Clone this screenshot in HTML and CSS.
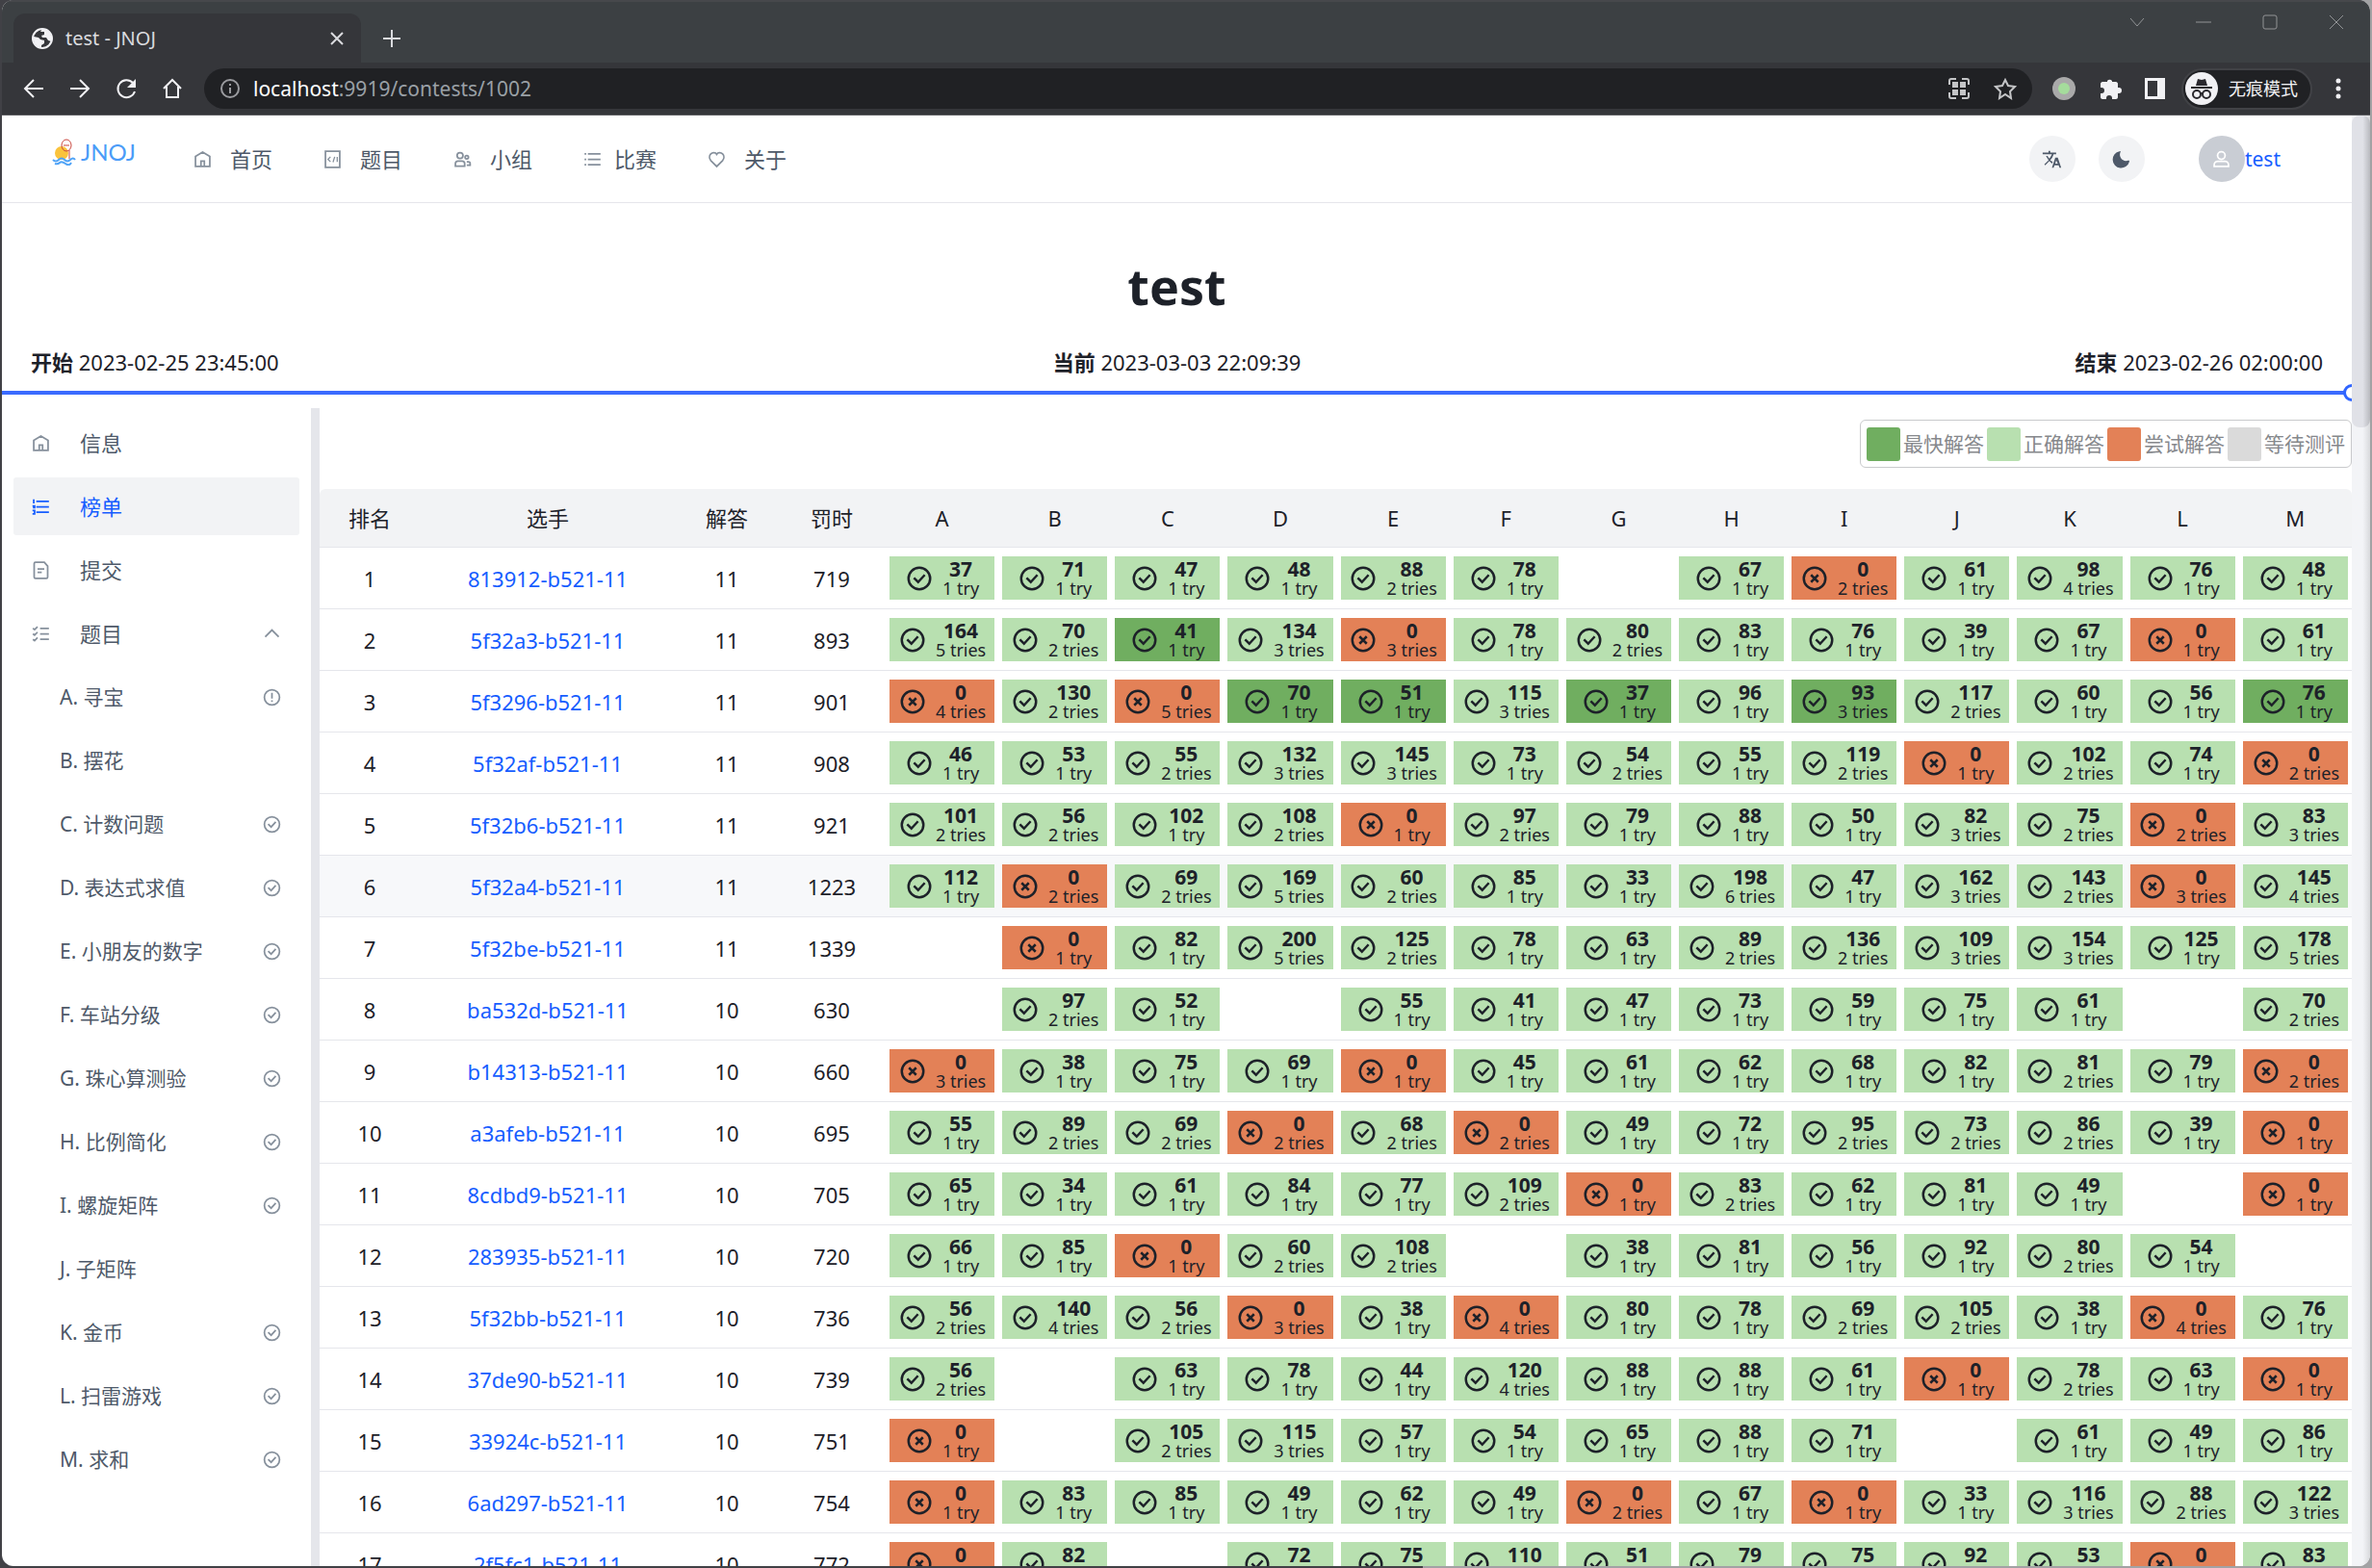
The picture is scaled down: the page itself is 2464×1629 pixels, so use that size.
FILE: index.html
```html
<!DOCTYPE html>
<html lang="zh-CN">
<head>
<meta charset="utf-8">
<title>test - JNOJ</title>
<link rel="stylesheet" href="styles.css">
</head>
<body>
<svg class="sprite" aria-hidden="true">
  <symbol id="i-home" viewBox="0 0 48 48"><path d="M7 17 24 7l17 10v24H7V17Z M20 41V28h8v13"/></symbol>
  <symbol id="i-code" viewBox="0 0 48 48"><path d="M7 5h34v38H7V5Z"/><path d="m19 18-6 6 6 6M29 18l-4 13M35 18v12" stroke-width="3"/></symbol>
  <symbol id="i-group" viewBox="0 0 48 48"><circle cx="18" cy="15" r="7"/><circle cx="34" cy="19" r="4"/><path d="M7 34a6 6 0 0 1 6-6h10a6 6 0 0 1 6 6v6H7v-6Z M34 30h4a4 4 0 0 1 4 4v4h-8"/></symbol>
  <symbol id="i-list" viewBox="0 0 48 48"><path d="M13 24h30M5 11h4M13 11h30M5 37h4M13 37h30M5 24h4"/></symbol>
  <symbol id="i-heart" viewBox="0 0 48 48"><path d="M38 11c-4-4-11-4-14 1-3-5-10-5-14-1-4 4-4 11 0 16l14 14 14-14c4-5 4-12 0-16Z"/></symbol>
  <symbol id="i-ordered" viewBox="0 0 48 48"><path d="M13 24h30M13 11h30M13 37h30M7 6v10M4 22h5v4H5M4 33h5v8H4"/></symbol>
  <symbol id="i-file" viewBox="0 0 48 48"><path d="M16 21h16M16 29h10M11 43h26a3 3 0 0 0 3-3V14l-8-9H11a3 3 0 0 0-3 3v32a3 3 0 0 0 3 3Z"/></symbol>
  <symbol id="i-checks" viewBox="0 0 48 48"><path d="M22 11h21M22 24h21M22 37h21M5 11l4 3 7-7M5 24l4 3 7-7M5 37l4 3 7-7"/></symbol>
  <symbol id="i-up" viewBox="0 0 48 48"><path d="M8 31 24 15l16 16"/></symbol>
  <symbol id="i-ok" viewBox="0 0 48 48"><circle cx="24" cy="24" r="18"/><path d="m15 23 7 7 11-12"/></symbol>
  <symbol id="i-bad" viewBox="0 0 48 48"><circle cx="24" cy="24" r="18"/><path d="m18 18 12 12M30 18 18 30"/></symbol>
  <symbol id="i-warn" viewBox="0 0 48 48"><circle cx="24" cy="24" r="18"/><path d="M24 13v14M24 31v4"/></symbol>
  <symbol id="i-user" viewBox="0 0 48 48"><circle cx="24" cy="15" r="9"/><path d="M7 37c0-5 4-8 8-8h18c4 0 8 3 8 8v4H7v-4Z"/></symbol>
</svg>

<div class="window">
  <header class="chrome">
    <div class="tabstrip">
      <div class="tab">
        <svg class="tab-globe" viewBox="0 0 22 22"><circle cx="11" cy="11" r="10" fill="#35363a" stroke="#f1f1f4" stroke-width="2"/><path d="M11 1a10 10 0 0 1 9 13l-3-1-2-3-4 0-1-2 3-1 0-3-4 0Z" fill="#f1f1f4"/><path d="M2 9l5 1 2 2 4 1 0 3-3 2 0 3A10 10 0 0 1 2 9Z" fill="#f1f1f4"/></svg>
        <span class="tab-title">test - JNOJ</span>
        <button class="bare" aria-label="关闭标签页"><svg width="14" height="14" viewBox="0 0 14 14" class="ln"><path d="m1 1 12 12M13 1 1 13"/></svg></button>
      </div>
      <button class="bare newtab" aria-label="新标签页"><svg width="20" height="20" viewBox="0 0 20 20" class="ln"><path d="M10 1v18M1 10h18"/></svg></button>
      <div class="winctl">
        <button class="bare" aria-label="搜索标签页"><svg width="16" height="16" viewBox="0 0 16 16"><path d="m1 4 7 8 7-8"/></svg></button>
        <button class="bare" aria-label="最小化"><svg width="16" height="16" viewBox="0 0 16 16"><path d="M0 8h16"/></svg></button>
        <button class="bare" aria-label="最大化"><svg width="16" height="16" viewBox="0 0 16 16"><rect x="1" y="1" width="14" height="14" rx="2"/></svg></button>
        <button class="bare" aria-label="关闭"><svg width="16" height="16" viewBox="0 0 16 16"><path d="m1 1 14 14M15 1 1 15"/></svg></button>
      </div>
    </div>
    <div class="toolbar">
      <div class="toolnav">
        <button class="bare" aria-label="后退"><svg width="24" height="24" viewBox="0 0 24 24"><path d="M22 12H4M12 3l-9 9 9 9"/></svg></button>
        <button class="bare" aria-label="前进"><svg width="24" height="24" viewBox="0 0 24 24"><path d="M2 12h18M12 3l9 9-9 9"/></svg></button>
        <button class="bare" aria-label="刷新"><svg width="24" height="24" viewBox="0 0 24 24"><path d="M19 6a9 9 0 1 0 2 9"/><path d="M22 2v9h-9Z" fill="#f1f1f4" stroke="none"/></svg></button>
        <button class="bare" aria-label="主页"><svg width="24" height="24" viewBox="0 0 24 24"><path d="M3 12l9-9 9 9M6 10v11h12V10"/></svg></button>
      </div>
      <div class="omnibox">
        <svg width="22" height="22" viewBox="0 0 22 22" class="info"><circle cx="11" cy="11" r="9"/><path d="M11 10v6M11 6v2"/></svg>
        <span class="url"><b>localhost</b>:9919/contests/1002</span>
        <svg width="24" height="24" viewBox="0 0 24 24"><path d="M2 8V4q0-2 2-2h5M15 2h5q2 0 2 2v4M22 16v4q0 2-2 2h-5M9 22H4q-2 0-2-2v-4" fill="none" stroke="#c4c5c7" stroke-width="2"/><path d="M5 5h6v6H5zM13 5h6v6h-6zM5 13h6v6H5zM13 13h6v6h-6z" fill="#c4c5c7"/></svg>
        <svg width="24" height="24" viewBox="0 0 24 24" class="star"><path d="m12 3 3 6 7 1-5 5 1 7-6-4-6 4 1-7-5-5 7-1Z" fill="none" stroke="#c4c5c7" stroke-width="2"/></svg>
      </div>
      <div class="exts">
        <svg width="24" height="24" viewBox="0 0 24 24"><circle cx="12" cy="12" r="12" fill="#a9a9a9"/><circle cx="12" cy="12" r="6" fill="#a5dc9c"/></svg>
        <svg width="24" height="24" viewBox="0 0 24 24"><path d="M21 11h-1V7c0-1-1-2-2-2h-4V4a3 3 0 0 0-5 0v1H4C3 5 2 6 2 7v4h1a3 3 0 0 1 0 6H2v4c0 1 1 2 2 2h4v-1a3 3 0 0 1 6 0v1h4c1 0 2-1 2-2v-4h1a3 3 0 0 0 0-6Z" fill="#f1f1f4"/></svg>
        <svg width="22" height="24" viewBox="0 0 22 24"><path d="M0 1h21v22H0zM3 4v16h10V4z" fill="#f1f1f4" fill-rule="evenodd"/></svg>
      </div>
      <button class="incognito">
        <svg width="34" height="34" viewBox="0 0 34 34"><circle cx="17" cy="17" r="17" fill="#f1f1f4"/><path d="M6 15h22v2H6zM11 14l2-7 4 1 4-1 2 7z" fill="#29282d"/><g fill="none" stroke="#29282d" stroke-width="2"><circle cx="12" cy="23" r="4"/><circle cx="22" cy="23" r="4"/><path d="M15 22h4"/></g></svg>
        无痕模式
      </button>
      <button class="bare menu" aria-label="菜单"><svg width="6" height="22" viewBox="0 0 6 22" fill="#f1f1f4"><circle cx="3" cy="3" r="2.500"/><circle cx="3" cy="11" r="2.500"/><circle cx="3" cy="19" r="2.500"/></svg></button>
    </div>
  </header>

  <div class="viewport">
    <div class="page">
      <header class="topbar">
        <a class="logo" href="#"><svg width="25" height="28" viewBox="0 0 25 28"><circle cx="10" cy="15" r="7" fill="#fac33c"/><g fill="none" stroke="#c9453c"><ellipse cx="15" cy="7" rx="5" ry="6"/><path d="M12 7h6M18 12v9"/></g><path d="M1 22q3 3 6 0t6 0 6 0 5 0M3 26q3 1 5-1t6 1 6-1" fill="none" stroke="#4fa3f7" stroke-width="2"/></svg><span>JNOJ</span></a>
        <nav class="mainnav">
          <a href="#"><svg class="ic"><use href="#i-home"/></svg>首页</a>
          <a href="#"><svg class="ic"><use href="#i-code"/></svg>题目</a>
          <a href="#"><svg class="ic"><use href="#i-group"/></svg>小组</a>
          <a href="#" class="tight"><svg class="ic"><use href="#i-list"/></svg>比赛</a>
          <a href="#"><svg class="ic"><use href="#i-heart"/></svg>关于</a>
        </nav>
        <div class="tools">
          <button class="round" aria-label="语言"><svg width="21" height="21" viewBox="0 0 24 24" fill="#4e5969"><path d="m13 15-3-2c2-2 3-4 4-7h3V4h-7V2H8v2H1v2h11c-1 2-2 4-3 5-1-1-2-2-2-3H5c1 2 2 3 3 5l-5 5 1 1 5-5 3 3 1-2Zm5-5h-2l-4 12h2l1-3h5l1 3h2l-4-12Zm-2 7 1-4 2 4h-3Z"/></svg></button>
          <button class="round" aria-label="深色模式"><svg width="21" height="21" viewBox="0 0 48 48" fill="#4e5969"><path d="M43 30A20 20 0 1 1 20 5c2-1 3 0 2 2-5 12 6 24 18 20 3-1 4 0 3 3Z"/></svg></button>
          <a class="user" href="#"><span class="avatar"><svg class="ic"><use href="#i-user"/></svg></span>test</a>
        </div>
      </header>

      <section class="contest">
        <h1>test</h1>
        <div class="times">
          <div><b>开始</b> 2023-02-25 23:45:00</div>
          <div><b>当前</b> 2023-03-03 22:09:39</div>
          <div><b>结束</b> 2023-02-26 02:00:00</div>
        </div>
        <div class="progress"><i class="knob"></i></div>
      </section>

      <div class="body">
        <nav class="side">
          <a href="#"><svg class="ic"><use href="#i-home"/></svg>信息</a>
          <a href="#" class="active"><svg class="ic"><use href="#i-ordered"/></svg>榜单</a>
          <a href="#"><svg class="ic"><use href="#i-file"/></svg>提交</a>
          <a href="#"><svg class="ic"><use href="#i-checks"/></svg>题目<svg class="ic end"><use href="#i-up"/></svg></a>
          <a href="#" class="sub">A. 寻宝<svg class="ic end"><use href="#i-warn"/></svg></a>
          <a href="#" class="sub">B. 摆花</a>
          <a href="#" class="sub">C. 计数问题<svg class="ic end"><use href="#i-ok"/></svg></a>
          <a href="#" class="sub">D. 表达式求值<svg class="ic end"><use href="#i-ok"/></svg></a>
          <a href="#" class="sub">E. 小朋友的数字<svg class="ic end"><use href="#i-ok"/></svg></a>
          <a href="#" class="sub">F. 车站分级<svg class="ic end"><use href="#i-ok"/></svg></a>
          <a href="#" class="sub">G. 珠心算测验<svg class="ic end"><use href="#i-ok"/></svg></a>
          <a href="#" class="sub">H. 比例简化<svg class="ic end"><use href="#i-ok"/></svg></a>
          <a href="#" class="sub">I. 螺旋矩阵<svg class="ic end"><use href="#i-ok"/></svg></a>
          <a href="#" class="sub">J. 子矩阵</a>
          <a href="#" class="sub">K. 金币<svg class="ic end"><use href="#i-ok"/></svg></a>
          <a href="#" class="sub">L. 扫雷游戏<svg class="ic end"><use href="#i-ok"/></svg></a>
          <a href="#" class="sub">M. 求和<svg class="ic end"><use href="#i-ok"/></svg></a>
        </nav>
        <main class="board">
          <ul class="legend">
            <li><i class="first"></i>最快解答</li>
            <li><i class="ok"></i>正确解答</li>
            <li><i class="bad"></i>尝试解答</li>
            <li><i class="wait"></i>等待测评</li>
          </ul>
          <table>
            <thead><tr><th class="c-rank">排名</th><th class="c-who">选手</th><th class="c-solved">解答</th><th class="c-time">罚时</th><th>A</th><th>B</th><th>C</th><th>D</th><th>E</th><th>F</th><th>G</th><th>H</th><th>I</th><th>J</th><th>K</th><th>L</th><th>M</th></tr></thead>
            <tbody id="standings"></tbody>
          </table>
        </main>
      </div>
    </div>
    <div class="scrollbar"><i></i></div>
  </div>
</div>
<script src="board.js"></script>
</body>
</html>
```
FILE: styles.css
```css
* { box-sizing: border-box; }
body {
  margin: 0;
  height: 100vh;
  overflow: hidden;
  padding: 0 2px 2px;
  background: linear-gradient(90deg, #414146 60%, #a2a2a4 60%);
  color: #1d2129;
  font: 22px/32px "Noto Sans", "Noto Sans CJK SC", sans-serif;
}
a { color: inherit; text-decoration: none; }
button { font: inherit; }
.sprite { display: none; }
.ic {
  width: 21px;
  height: 21px;
  flex: none;
  fill: none;
  stroke: currentColor;
  stroke-width: 4;
}
.bare {
  display: flex;
  padding: 0;
  border: 0;
  background: none;
}

.window {
  display: flex;
  flex-direction: column;
  height: 100%;
  overflow: hidden;
  border-radius: 12px;
  background: #fff;
}

/* browser frame */
.chrome { background: #3c4043; color: #dadbdf; }
.tabstrip {
  display: flex;
  height: 65px;
  padding: 12px 27px 0 12px;
  border-top: 2px solid #47484c;
}
.tab {
  display: flex;
  align-items: center;
  gap: 13px;
  width: 361px;
  padding: 0 18px 0 19px;
  border-radius: 12px 12px 0 0;
  background: #35363a;
  font-size: 20px;
}
.tab-globe { width: 22px; height: 22px; }
.tab-title { flex: 1; }
.ln { fill: none; stroke: #dadbdf; stroke-width: 2; }
.newtab { align-items: center; margin-left: 22px; }
.winctl {
  display: flex;
  gap: 53px;
  margin-left: auto;
}
.winctl svg { fill: none; stroke: #929496; }
.winctl .bare { height: 16px; margin-top: 1px; }
.toolbar {
  display: flex;
  align-items: center;
  height: 55px;
  padding: 0 30px 0 21px;
  border-bottom: 1px solid #5b5c60;
  background: #35363a;
}
.toolnav { display: flex; gap: 24px; }
.toolnav svg { fill: none; stroke: #f1f1f4; stroke-width: 2; }
.omnibox {
  display: flex;
  flex: 1;
  align-items: center;
  height: 42px;
  margin-left: 21px;
  padding: 0 16px;
  border-radius: 21px;
  background: #202124;
  color: #9aa0a6;
  font-size: 21px;
}
.info { fill: none; stroke: #9a9b9f; stroke-width: 2; }
.url { flex: 1; margin-left: 13px; }
.url b { color: #fff; font-weight: 400; }
.star { margin-left: 24px; }
.exts { display: flex; gap: 24px; margin: 0 16px 0 21px; }
.incognito {
  display: flex;
  align-items: center;
  gap: 11px;
  height: 43px;
  padding: 0 13px 0 2px;
  border: 2px solid #414246;
  border-radius: 22px;
  background: #202124;
  color: #f1f1f4;
  font-size: 18px;
}
.menu { margin-left: 24px; }

.viewport { display: flex; flex: 1; min-height: 0; }
.page { flex: 1; min-width: 0; overflow: hidden; }
.scrollbar { width: 19px; background: linear-gradient(90deg, #f3f4f7 60%, #d8d9dc); }
.scrollbar i {
  display: block;
  height: 22%;
  max-height: 324px;
  border-radius: 8px;
  background: linear-gradient(90deg, #e0e1e7 60%, #b9babf);
}

/* site header */
.topbar {
  display: flex;
  height: 91px;
  padding: 0 74px 0 52px;
  border-bottom: 1px solid #e5e6eb;
}
.logo {
  display: flex;
  align-items: center;
  gap: 5px;
  width: 146px;
  height: 76px;
  color: #4a9cf8;
  font: 24px/32px "Lato", sans-serif;
}
.mainnav { display: flex; gap: 52px; align-items: center; color: #4e5969; }
.mainnav a { display: flex; align-items: center; gap: 18px; }
.mainnav .tight { gap: 12px; }
.mainnav .ic, .side .ic { color: #86909c; }
.tools { display: flex; align-items: center; margin-left: auto; }
.round {
  display: flex;
  align-items: center;
  justify-content: center;
  width: 48px;
  height: 48px;
  margin-right: 24px;
  padding: 0;
  border: 0;
  border-radius: 50%;
  background: #f2f3f5;
}
.user { display: flex; align-items: center; margin-left: 32px; color: #165dff; font-size: 21px; }
.avatar {
  display: flex;
  align-items: center;
  justify-content: center;
  width: 48px;
  height: 48px;
  border-radius: 50%;
  background: #c9cdd4;
  color: #fff;
}

/* contest heading */
.contest h1 {
  margin: 0;
  padding-top: 46px;
  font-size: 52px;
  line-height: 80px;
  text-align: center;
}
.times {
  display: flex;
  justify-content: space-between;
  padding: 23px 30px 14px;
}
.progress { position: relative; height: 4px; background: #3a6bff; }
.knob {
  position: absolute;
  right: -9px;
  top: -7px;
  width: 18px;
  height: 18px;
  border: 3px solid #3065ff;
  border-radius: 50%;
  background: #fff;
}

.body { display: flex; padding-top: 14px; }
.side {
  width: 330px;
  height: 1300px;
  flex: none;
  padding: 6px 12px;
  border-right: 9px solid #e5e6eb;
  color: #4e5969;
}
.side a {
  display: flex;
  align-items: center;
  height: 60px;
  margin-bottom: 6px;
  padding: 0 18px;
  gap: 30px;
  border-radius: 3px;
}
.side .sub { padding-left: 48px; font-size: 21px; }
.side .active { background: #f2f3f5; }
.side .active, .side .active .ic { color: #165dff; }
.side .end { margin-left: auto; }

.board { flex: 1; min-width: 0; }
.legend {
  display: flex;
  gap: 3px;
  align-items: center;
  width: fit-content;
  height: 50px;
  margin: 12px 0 22px auto;
  padding: 0 6px;
  border: 1px solid #c9cacc;
  border-radius: 6px;
  list-style: none;
  color: #86888c;
  font-size: 21px;
}
.legend li { display: flex; align-items: center; gap: 3px; }
.legend i { width: 35px; height: 35px; border-radius: 3px; }
.first { background: #70ae60; }
.ok { background: #b8e0b0; }
.bad { background: #e38157; }
.wait { background: #dadada; }

table { width: 100%; table-layout: fixed; border-collapse: separate; border-spacing: 0; }
th { height: 61px; padding: 0; background: #f2f3f5; border-bottom: 1px solid #e5e6eb; font-weight: 400; }
th:first-child { border-radius: 6px 0 0; }
th:last-child { border-radius: 0 6px 0 0; }
td { height: 64px; padding: 0 4px; border-bottom: 1px solid #e5e6eb; text-align: center; }
.c-rank { width: 104px; }
.c-who { width: 266px; }
.c-solved { width: 106px; }
.c-time { width: 112px; }
td a { color: #165dff; }
.hover td { background: #f7f8fa; }
.cell {
  display: flex;
  align-items: center;
  justify-content: center;
  gap: 9px;
  height: 45px;
}
.cell .ic { width: 30px; height: 30px; }
.cell span { font-size: 18px; line-height: 20px; }
.cell b { display: block; font-size: 21px; line-height: 20px; }
```
FILE: board.js
```js
// Each problem cell: minutes/attempts, "*" = fastest solve, "x" = failed, "-" = no attempt.
const teams = `
813912 11 719 37/1 71/1 47/1 48/1 88/2 78/1 - 67/1 x0/2 61/1 98/4 76/1 48/1
5f32a3 11 893 164/5 70/2 *41/1 134/3 x0/3 78/1 80/2 83/1 76/1 39/1 67/1 x0/1 61/1
5f3296 11 901 x0/4 130/2 x0/5 *70/1 *51/1 115/3 *37/1 96/1 *93/3 117/2 60/1 56/1 *76/1
5f32af 11 908 46/1 53/1 55/2 132/3 145/3 73/1 54/2 55/1 119/2 x0/1 102/2 74/1 x0/2
5f32b6 11 921 101/2 56/2 102/1 108/2 x0/1 97/2 79/1 88/1 50/1 82/3 75/2 x0/2 83/3
5f32a4 11 1223 112/1 x0/2 69/2 169/5 60/2 85/1 33/1 198/6 47/1 162/3 143/2 x0/3 145/4
5f32be 11 1339 - x0/1 82/1 200/5 125/2 78/1 63/1 89/2 136/2 109/3 154/3 125/1 178/5
ba532d 10 630 - 97/2 52/1 - 55/1 41/1 47/1 73/1 59/1 75/1 61/1 - 70/2
b14313 10 660 x0/3 38/1 75/1 69/1 x0/1 45/1 61/1 62/1 68/1 82/1 81/2 79/1 x0/2
a3afeb 10 695 55/1 89/2 69/2 x0/2 68/2 x0/2 49/1 72/1 95/2 73/2 86/2 39/1 x0/1
8cdbd9 10 705 65/1 34/1 61/1 84/1 77/1 109/2 x0/1 83/2 62/1 81/1 49/1 - x0/1
283935 10 720 66/1 85/1 x0/1 60/2 108/2 - 38/1 81/1 56/1 92/1 80/2 54/1 -
5f32bb 10 736 56/2 140/4 56/2 x0/3 38/1 x0/4 80/1 78/1 69/2 105/2 38/1 x0/4 76/1
37de90 10 739 56/2 - 63/1 78/1 44/1 120/4 88/1 88/1 61/1 x0/1 78/2 63/1 x0/1
33924c 10 751 x0/1 - 105/2 115/3 57/1 54/1 65/1 88/1 71/1 - 61/1 49/1 86/1
6ad297 10 754 x0/1 83/1 85/1 49/1 62/1 49/1 x0/2 67/1 x0/1 33/1 116/3 88/2 122/3
2f5fc1 10 772 x0/1 82/1 - 72/1 75/1 110/2 51/1 79/2 75/2 92/1 53/2 x0/1 83/1
`.trim().split("\n").map(line => line.split(" "));

function cell(code) {
  if (code === "-") return "<td></td>";
  const kind = code[0] === "x" ? "bad" : code[0] === "*" ? "first" : "ok";
  const [minutes, tries] = code.replace(/[x*]/, "").split("/");
  const icon = kind === "bad" ? "i-bad" : "i-ok";
  return `<td><div class="cell ${kind}"><svg class="ic"><use href="#${icon}"/></svg>` +
    `<span><b>${minutes}</b>${tries} ${tries === "1" ? "try" : "tries"}</span></div></td>`;
}

document.getElementById("standings").innerHTML = teams.map(([id, solved, penalty, ...cells], i) =>
  `<tr${i === 5 ? ' class="hover"' : ""}><td>${i + 1}</td><td><a href="#">${id}-b521-11</a></td>` +
  `<td>${solved}</td><td>${penalty}</td>${cells.map(cell).join("")}</tr>`).join("");
```
